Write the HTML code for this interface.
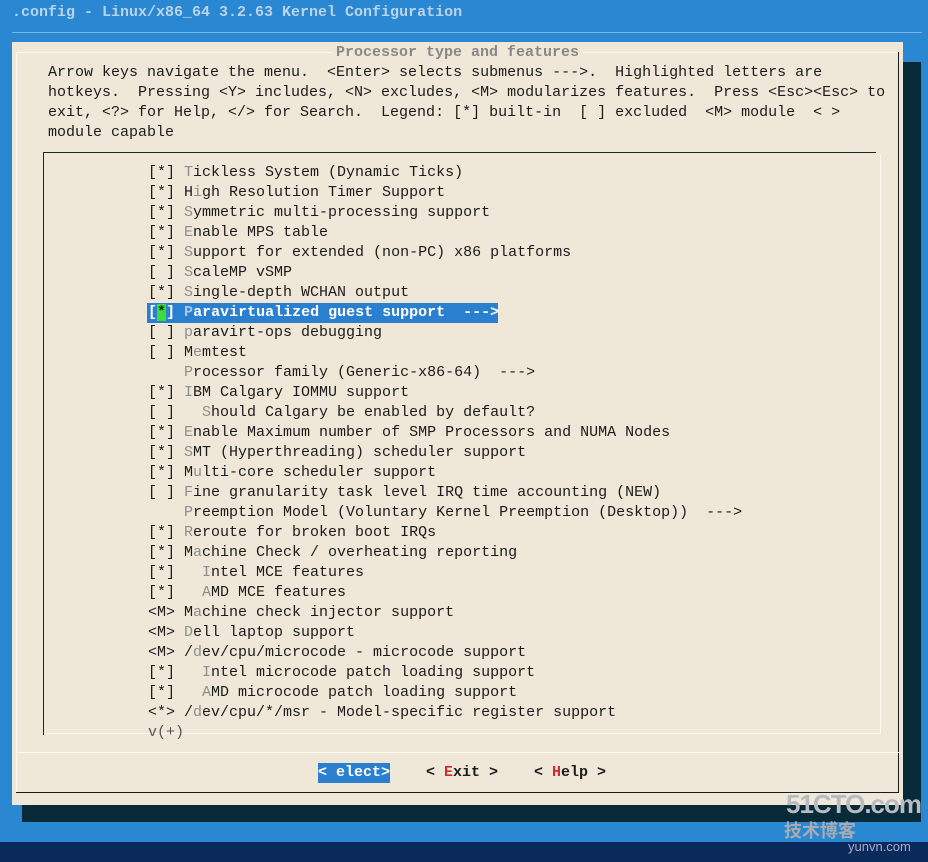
<!DOCTYPE html>
<html><head><meta charset="utf-8"><style>
*{margin:0;padding:0}
body{width:928px;height:862px;background:#2a87d2;position:relative;overflow:hidden;font-family:"Liberation Mono","DejaVu Sans Mono",monospace;font-size:15px;color:#1c1c1c}
.t{position:absolute;white-space:pre;line-height:20px;height:20px;margin-top:1px}
.h{color:#8e8e8e}
#nav{position:absolute;left:0;top:842px;width:928px;height:20px;background:#0b2a5c}
#shadow{position:absolute;left:22px;top:62px;width:899px;height:760px;background:#082a38}
#dlg{position:absolute;left:12px;top:42px;width:891px;height:763px;background:#efe7d7}
</style></head><body>
<div class="t" style="left:12px;top:2px;color:#b9d4ec;font-weight:bold">.config - Linux/x86_64 3.2.63 Kernel Configuration</div>
<div style="position:absolute;left:12px;top:32px;width:910px;height:1px;background:#7cb4e4"></div>
<div id="nav"></div>
<div id="shadow"></div>
<div id="dlg"></div>
<div style="position:absolute;left:16px;top:52px;width:883px;height:1px;background:#fffaf0"></div>
<div style="position:absolute;left:16px;top:52px;width:1px;height:740px;background:#fffaf0"></div>
<div style="position:absolute;left:898px;top:52px;width:1px;height:741px;background:#1a1a1a"></div>
<div style="position:absolute;left:16px;top:792px;width:883px;height:1px;background:#1a1a1a"></div>
<div style="position:absolute;left:16px;top:752px;width:883px;height:1px;background:#fffaf0"></div>
<div class="t" style="left:332px;top:42px;padding:0 4px;background:#efe7d7;color:#888;font-weight:bold">Processor type and features</div>
<div class="t" style="left:48px;top:62px">Arrow keys navigate the menu.  &lt;Enter&gt; selects submenus ---&gt;.  Highlighted letters are</div>
<div class="t" style="left:48px;top:82px">hotkeys.  Pressing &lt;Y&gt; includes, &lt;N&gt; excludes, &lt;M&gt; modularizes features.  Press &lt;Esc&gt;&lt;Esc&gt; to</div>
<div class="t" style="left:48px;top:102px">exit, &lt;?&gt; for Help, &lt;/&gt; for Search.  Legend: [*] built-in  [ ] excluded  &lt;M&gt; module  &lt; &gt;</div>
<div class="t" style="left:48px;top:122px">module capable</div>
<div style="position:absolute;left:43px;top:152px;width:833px;height:1px;background:#1a2a2a"></div>
<div style="position:absolute;left:43px;top:152px;width:1px;height:583px;background:#1a2a2a"></div>
<div style="position:absolute;left:880px;top:154px;width:1px;height:580px;background:#fffaf0"></div>
<div style="position:absolute;left:46px;top:733px;width:835px;height:1px;background:#fffaf0"></div>
<div class="t" style="left:148px;top:162px">[*] <span class="h">T</span>ickless System (Dynamic Ticks)</div>
<div class="t" style="left:148px;top:182px">[*] H<span class="h">i</span>gh Resolution Timer Support</div>
<div class="t" style="left:148px;top:202px">[*] <span class="h">S</span>ymmetric multi-processing support</div>
<div class="t" style="left:148px;top:222px">[*] <span class="h">E</span>nable MPS table</div>
<div class="t" style="left:148px;top:242px">[*] <span class="h">S</span>upport for extended (non-PC) x86 platforms</div>
<div class="t" style="left:148px;top:262px">[ ] <span class="h">S</span>caleMP vSMP</div>
<div class="t" style="left:148px;top:282px">[*] <span class="h">S</span>ingle-depth WCHAN output</div>
<div class="t" style="left:147px;top:302px;width:350px;padding-left:1px;background:#2b7fcf;color:#fff;font-weight:bold">[<span style="background:#3ddc3d;color:#0a2a0a">*</span>] <span style="color:#a9c8ea">P</span>aravirtualized guest support  ---&gt;</div>
<div class="t" style="left:148px;top:322px">[ ] <span class="h">p</span>aravirt-ops debugging</div>
<div class="t" style="left:148px;top:342px">[ ] M<span class="h">e</span>mtest</div>
<div class="t" style="left:148px;top:362px">    <span class="h">P</span>rocessor family (Generic-x86-64)  ---&gt;</div>
<div class="t" style="left:148px;top:382px">[*] <span class="h">I</span>BM Calgary IOMMU support</div>
<div class="t" style="left:148px;top:402px">[ ]   <span class="h">S</span>hould Calgary be enabled by default?</div>
<div class="t" style="left:148px;top:422px">[*] <span class="h">E</span>nable Maximum number of SMP Processors and NUMA Nodes</div>
<div class="t" style="left:148px;top:442px">[*] <span class="h">S</span>MT (Hyperthreading) scheduler support</div>
<div class="t" style="left:148px;top:462px">[*] M<span class="h">u</span>lti-core scheduler support</div>
<div class="t" style="left:148px;top:482px">[ ] <span class="h">F</span>ine granularity task level IRQ time accounting (NEW)</div>
<div class="t" style="left:148px;top:502px">    <span class="h">P</span>reemption Model (Voluntary Kernel Preemption (Desktop))  ---&gt;</div>
<div class="t" style="left:148px;top:522px">[*] <span class="h">R</span>eroute for broken boot IRQs</div>
<div class="t" style="left:148px;top:542px">[*] M<span class="h">a</span>chine Check / overheating reporting</div>
<div class="t" style="left:148px;top:562px">[*]   <span class="h">I</span>ntel MCE features</div>
<div class="t" style="left:148px;top:582px">[*]   <span class="h">A</span>MD MCE features</div>
<div class="t" style="left:148px;top:602px">&lt;M&gt; M<span class="h">a</span>chine check injector support</div>
<div class="t" style="left:148px;top:622px">&lt;M&gt; <span class="h">D</span>ell laptop support</div>
<div class="t" style="left:148px;top:642px">&lt;M&gt; /<span class="h">d</span>ev/cpu/microcode - microcode support</div>
<div class="t" style="left:148px;top:662px">[*]   <span class="h">I</span>ntel microcode patch loading support</div>
<div class="t" style="left:148px;top:682px">[*]   <span class="h">A</span>MD microcode patch loading support</div>
<div class="t" style="left:148px;top:702px">&lt;*&gt; /<span class="h">d</span>ev/cpu/*/msr - Model-specific register support</div>
<div class="t" style="left:148px;top:722px;color:#555">v(+)</div>
<div class="t" style="left:318px;top:762px;background:#2b7fcf;color:#fff;font-weight:bold">&lt; elect&gt;</div>
<div class="t" style="left:426px;top:762px;font-weight:bold">&lt; <span style="color:#c83030">E</span>xit &gt;</div>
<div class="t" style="left:534px;top:762px;font-weight:bold">&lt; <span style="color:#c83030">H</span>elp &gt;</div>
<div class="t" style="left:786px;top:788px;font-family:'Liberation Sans',sans-serif;font-size:26px;font-weight:bold;color:#b8bcc0;line-height:30px;height:30px;letter-spacing:-1px">51CTO.com</div>
<div class="t" style="left:784px;top:820px;font-family:'Liberation Sans','Noto Sans CJK SC',sans-serif;font-size:18px;font-weight:bold;color:#a8acb0">技术博客</div>
<div class="t" style="left:848px;top:836px;font-family:'Liberation Sans',sans-serif;font-size:13px;color:#aac">yunvn.com</div>
</body></html>
